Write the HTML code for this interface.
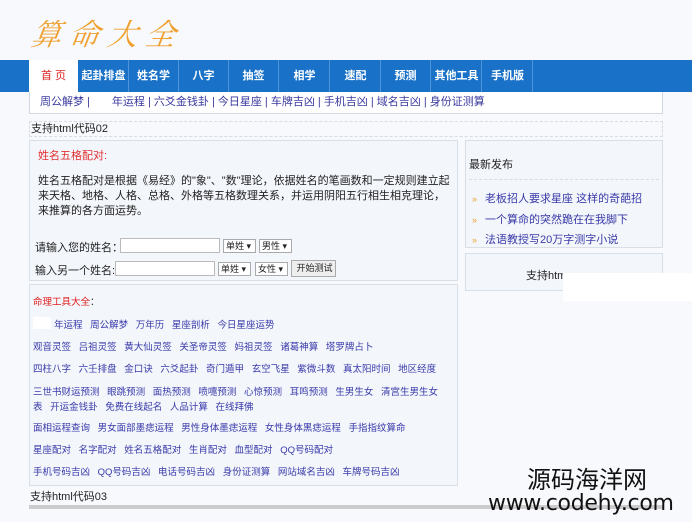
<!DOCTYPE html>
<html><head><meta charset="utf-8"><style>
*{margin:0;padding:0;box-sizing:border-box}
body{width:692px;height:522px;background:#f7f9fc;font-family:"Liberation Sans","Noto Sans CJK SC",sans-serif;font-size:11px;color:#222;position:relative;overflow:hidden}
.abs{position:absolute}
.logo{left:32px;top:10px;font-family:"Noto Serif CJK SC",serif;font-size:30px;color:#f0a030;letter-spacing:8px;font-style:italic;transform:skewX(-8deg)}
.nav{left:0;top:60px;width:692px;height:32px;background:#1a72c8}
.nav a{position:absolute;top:0;height:32px;line-height:32px;width:50px;text-align:center;color:#fff;font-weight:bold;font-size:11px;border-right:1px solid #4f93d8;text-decoration:none}
.nav a.home{background:#fff;color:#d22;font-weight:normal;border:none}
.sub{left:29px;top:92px;width:634px;height:22px;background:#fff;border:1px solid #cfd8e3;border-top:none;line-height:20px;color:#3a3aa0;font-size:11px}
.bar{border:1px dashed #d6dce4;height:16px;line-height:14px;font-size:11px;color:#222;padding-left:1px}
.box{background:#f3f6fb;border:1px solid #d9dfe7}
.red{color:#e23030}
input.t{position:absolute;height:15px;border:1px solid #bbb;background:#fff}
.sel{position:absolute;height:14px;border:1px solid #aaa;background:#fff;font-size:9px;line-height:12px;padding-left:2px}
.tools div{position:absolute;left:14px;font-size:9.5px;color:#3a3aaa;word-spacing:5px;white-space:nowrap}
.rl{position:absolute;left:6px;font-size:11px;color:#3a3aa8}
.rl b{color:#f0a030;font-weight:normal;margin-right:8px;font-size:9px}
</style></head><body>
<div class="abs logo">算命大全</div>
<div class="abs nav">
<a class="home" style="left:29px;width:49px">首 页</a>
<a style="left:79px">起卦排盘</a><a style="left:129px">姓名学</a><a style="left:179px">八字</a><a style="left:229px">抽签</a><a style="left:280px">相学</a><a style="left:331px">速配</a><a style="left:381px">预测</a><a style="left:432px">其他工具</a><a style="left:483px">手机版</a>
</div>
<div class="abs sub"><span style="margin-left:10px">周公解梦 |</span><span style="margin-left:22px">年运程 | 六爻金钱卦 | 今日星座 | 车牌吉凶 | 手机吉凶 | 域名吉凶 | 身份证测算</span></div>
<div class="abs bar" style="left:29px;top:121px;width:634px">支持html代码02</div>

<div class="abs box" style="left:29px;top:140px;width:429px;height:141px">
<div class="abs red" style="left:8px;top:6px">姓名五格配对:</div>
<div class="abs" style="left:8px;top:33px;width:415px;line-height:15px;font-size:11px">姓名五格配对是根据《易经》的"象"、"数"理论，依据姓名的笔画数和一定规则建立起来天格、地格、人格、总格、外格等五格数理关系，并运用阴阳五行相生相克理论，来推算的各方面运势。</div>
<div class="abs" style="left:5px;top:98px">请输入您的姓名：</div>
<input class="t" style="left:90px;top:97px;width:100px">
<div class="sel" style="left:193px;top:98px;width:33px">单姓 ▾</div>
<div class="sel" style="left:229px;top:98px;width:33px">男性 ▾</div>
<div class="abs" style="left:5px;top:121px">输入另一个姓名:</div>
<input class="t" style="left:85px;top:120px;width:100px">
<div class="sel" style="left:188px;top:121px;width:33px">单姓 ▾</div>
<div class="sel" style="left:225px;top:121px;width:33px">女性 ▾</div>
<div class="sel" style="left:261px;top:119px;width:45px;height:17px;background:#eee;line-height:15px;font-size:9px;text-align:center">开始测试</div>
</div>

<div class="abs box" style="left:465px;top:140px;width:198px;height:108px">
<div class="abs" style="left:3px;top:15px">最新发布</div>
<div class="abs" style="left:3px;top:38px;width:190px;border-top:1px dashed #d6dce4"></div>
<div class="rl" style="top:49px"><b>»</b>老板招人要求星座 这样的奇葩招</div>
<div class="rl" style="top:70px"><b>»</b>一个算命的突然跪在在我脚下</div>
<div class="rl" style="top:90px"><b>»</b>法语教授写20万字测字小说</div>
</div>
<div class="abs box" style="left:465px;top:253px;width:198px;height:38px">
<div class="abs" style="left:60px;top:13px">支持htm</div>
</div>
<div class="abs" style="left:563px;top:273px;width:129px;height:28px;background:#fff"></div>

<div class="abs box tools" style="left:29px;top:284px;width:429px;height:202px">
<div style="left:3px;top:9px;color:#e02020">命理工具大全<span style="color:#222">：</span></div>
<div style="left:3px;top:32px;width:18px;height:12px;background:#fff"></div>
<div style="left:24px;top:32px">年运程 周公解梦 万年历 星座剖析 今日星座运势</div>
<div style="left:3px;top:54px">观音灵签 吕祖灵签 黄大仙灵签 关圣帝灵签 妈祖灵签 诸葛神算 塔罗牌占卜</div>
<div style="left:3px;top:76px">四柱八字 六壬排盘 金口诀 六爻起卦 奇门遁甲 玄空飞星 紫微斗数 真太阳时间 地区经度</div>
<div style="left:3px;top:99px">三世书财运预测 眼跳预测 面热预测 喷嚏预测 心惊预测 耳鸣预测 生男生女 清宫生男生女</div>
<div style="left:3px;top:114px">表 开运金钱卦 免费在线起名 人品计算 在线拜佛</div>
<div style="left:3px;top:135px">面相运程查询 男女面部墨痣运程 男性身体墨痣运程 女性身体黑痣运程 手指指纹算命</div>
<div style="left:3px;top:157px">星座配对 名字配对 姓名五格配对 生肖配对 血型配对 QQ号码配对</div>
<div style="left:3px;top:179px">手机号码吉凶 QQ号码吉凶 电话号码吉凶 身份证测算 网站域名吉凶 车牌号码吉凶</div>
</div>
<div class="abs bar" style="left:29px;top:490px;width:634px;border-top:none;border-left:none;border-right:none">支持html代码03</div>
<div class="abs" style="left:29px;top:505px;width:634px;height:4px;background:#ccc"></div>

<div class="abs" style="left:527px;top:463px;font-size:24px;color:#111;font-family:'Noto Sans CJK SC',sans-serif;line-height:30px">源码海洋网</div>
<div class="abs" style="left:488px;top:490px;font-size:22px;color:#111;font-family:'DejaVu Sans',sans-serif;line-height:28px;letter-spacing:-0.3px">www.codehy.com</div>
</body></html>
